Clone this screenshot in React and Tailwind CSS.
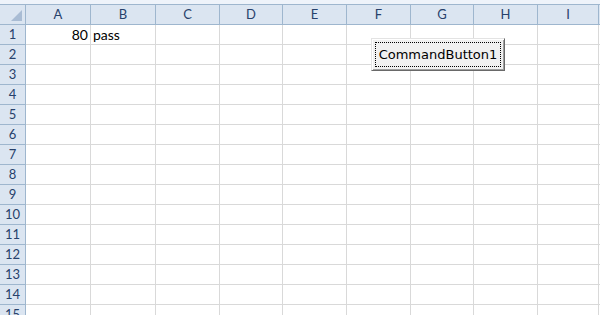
import React from "react";

// column widths include the 1px right border
const columns = [
  { name: "A", w: "w-[65px]" },
  { name: "B", w: "w-[65px]" },
  { name: "C", w: "w-[64px]" },
  { name: "D", w: "w-[63px]" },
  { name: "E", w: "w-[64px]" },
  { name: "F", w: "w-[64px]" },
  { name: "G", w: "w-[63px]" },
  { name: "H", w: "w-[64px]" },
  { name: "I", w: "w-[61px]" },
];

const rows = Array.from({ length: 15 }, (_, i) => i + 1);

const cellText = {
  "1A": { text: "80", align: "justify-end pr-[2px]" },
  "1B": { text: "pass", align: "justify-start pl-[2px]" },
};

const App = () => {
  return (
    <div className="relative w-[600px] h-[315px] overflow-hidden bg-white font-['Liberation_Sans',sans-serif]">
      {/* strip above the column headers */}
      <div className="h-[5px] bg-[#eef3fa] border-b border-[#9eb6ce]" />

      {/* column headers */}
      <div className="flex h-[20px] bg-[#dbe5f1] border-b border-[#9eb6ce]">
        <div className="relative w-[26px] shrink-0 border-r border-[#9eb6ce]">
          <svg className="absolute right-[3px] bottom-[3px]" width="11" height="11" viewBox="0 0 11 11">
            <polygon points="11,0 11,11 0,11" fill="#a9bcd4" />
          </svg>
        </div>
        {columns.map((col) => (
          <div
            key={col.name}
            className={`${col.w} shrink-0 border-r border-[#9eb6ce] flex items-center justify-center text-[13px] text-[#27416b] font-['Lato',sans-serif]`}
          >
            {col.name}
          </div>
        ))}
        <div className="flex-1" />
      </div>

      {/* grid body */}
      {rows.map((r) => (
        <div key={r} className="flex h-[20px]">
          <div className="w-[26px] shrink-0 bg-[#dbe5f1] border-r border-b border-[#9eb6ce] flex items-center justify-center text-[13px] text-[#27416b] font-['Lato',sans-serif]">
            {r}
          </div>
          {columns.map((col) => {
            const c = cellText[`${r}${col.name}`];
            return (
              <div
                key={col.name}
                className={`${col.w} shrink-0 border-r border-b border-[#d9d9d9] flex items-center text-[14px] text-black font-['Lato',sans-serif] ${c ? c.align : ""}`}
              >
                {c ? c.text : ""}
              </div>
            );
          })}
          <div className="flex-1 border-b border-[#d9d9d9]" />
        </div>
      ))}

      {/* ActiveX command button over the sheet */}
      <div className="absolute left-[371px] top-[38px] w-[134px] h-[33px] bg-[#f0f0f0] border border-t-[#e3e3e3] border-l-[#e3e3e3] border-r-[#696969] border-b-[#696969] shadow-[inset_1px_1px_0_#ffffff,inset_-1px_-1px_0_#a0a0a0]">
        <div className="absolute inset-[3px] border border-dotted border-black flex items-center justify-center text-[13px] text-black font-['DejaVu_Sans',sans-serif]">
          CommandButton1
        </div>
      </div>
    </div>
  );
};

export default App;
